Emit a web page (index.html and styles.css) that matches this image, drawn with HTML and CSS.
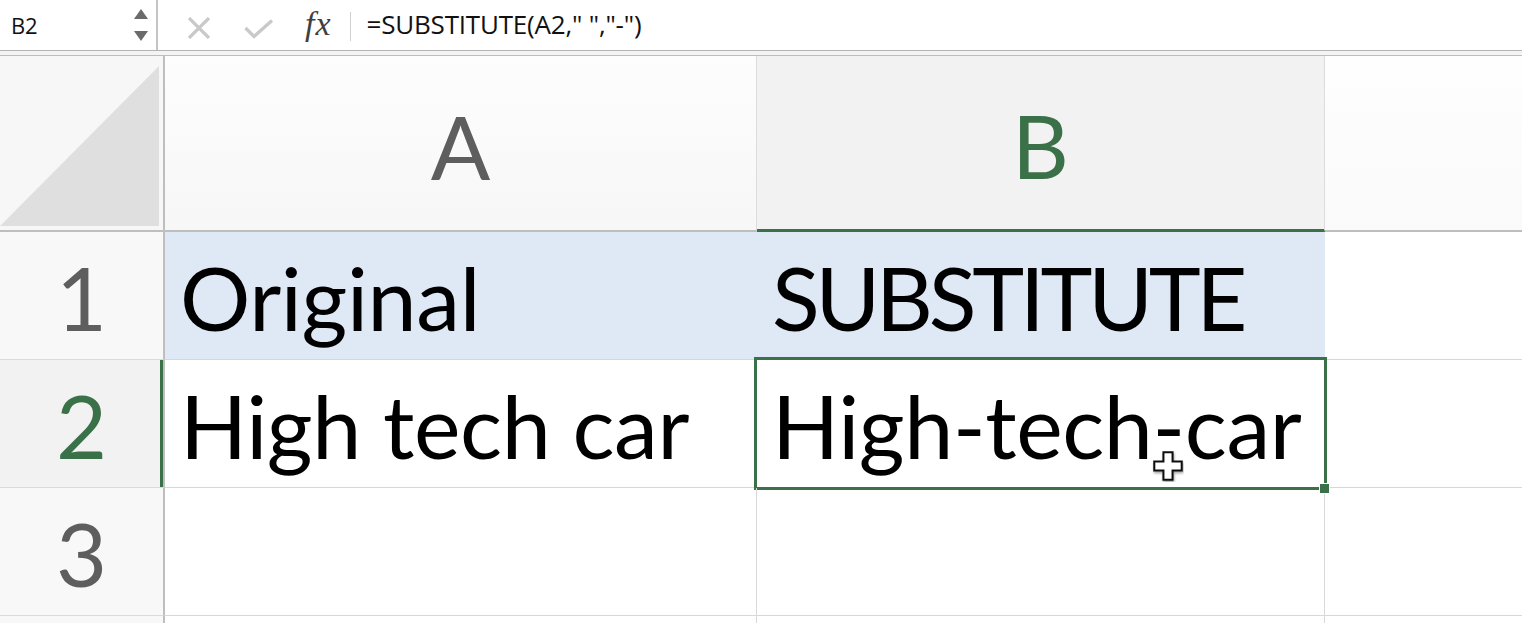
FILE: index.html
```html
<!DOCTYPE html>
<html>
<head>
<meta charset="utf-8">
<link rel="stylesheet" href="styles.css">
</head>
<body>
<div class="toolbar">
  <div class="namebox">
    <span class="name">B2</span>
    <svg class="spin" width="16" height="34" viewBox="0 0 16 34">
      <polygon points="8,0 15,10 1,10" fill="#6b6b6b"/>
      <polygon points="1,22 15,22 8,32" fill="#6b6b6b"/>
    </svg>
  </div>
  <div class="tools">
    <svg class="ico-x" width="24" height="22" viewBox="0 0 24 22">
      <path d="M2 1 L22 21 M22 1 L2 21" stroke="#c9c9c9" stroke-width="3.2" fill="none"/>
    </svg>
    <svg class="ico-ok" width="30" height="20" viewBox="0 0 30 20">
      <path d="M1.5 9 L10 17.5 L28 1.5" stroke="#c9c9c9" stroke-width="3.4" fill="none"/>
    </svg>
    <span class="fx">fx</span>
    <span class="vsep"></span>
  </div>
  <div class="formula">=SUBSTITUTE(A2," ","-")</div>
</div>
<div class="gap"></div>
<div class="sheet">
  <div class="corner"><div class="tri"></div></div>
  <div class="colhead">A</div>
  <div class="colhead sel">B</div>
  <div class="colhead last"></div>

  <div class="rowhead">1</div>
  <div class="cell hl">Original</div>
  <div class="cell hl"><span class="caps">SUBSTITUTE</span></div>
  <div class="cell last"></div>

  <div class="rowhead sel">2</div>
  <div class="cell">High tech car</div>
  <div class="cell active">High-tech-car<span class="handle"></span>
    <svg class="cursor" width="32" height="32" viewBox="0 0 28 28">
      <defs><filter id="sh" x="-30%" y="-30%" width="160%" height="160%"><feDropShadow dx="0.6" dy="1.6" stdDeviation="1" flood-color="#000" flood-opacity="0.35"/></filter></defs>
      <path d="M10 2 H18 V10 H26 V18 H18 V26 H10 V18 H2 V10 H10 Z" fill="#ffffff" stroke="#111" stroke-width="1.8" filter="url(#sh)"/>
    </svg>
  </div>
  <div class="cell last"></div>

  <div class="rowhead">3</div>
  <div class="cell"></div>
  <div class="cell"></div>
  <div class="cell last"></div>

  <div class="rowhead"></div>
  <div class="cell"></div>
  <div class="cell"></div>
  <div class="cell last"></div>
</div>
</body>
</html>
```
FILE: styles.css
```css
html, body {
  margin: 0;
  padding: 0;
  background: #ffffff;
  overflow: hidden;
  width: 1522px;
  height: 623px;
}
body {
  font-family: Lato, "Open Sans", sans-serif;
}
.toolbar {
  height: 50px;
  display: flex;
  align-items: stretch;
  border-bottom: 1px solid #b4b4b4;
  background: #ffffff;
}
.namebox {
  width: 158px;
  border-right: 2px solid #c4c4c4;
  display: flex;
  align-items: center;
  justify-content: space-between;
  box-sizing: border-box;
  padding: 0 7px 0 11px;
}
.name {
  font-size: 22px;
  color: #111;
  font-family: "Open Sans", Lato, sans-serif;
  letter-spacing: -0.3px;
}
.spin { margin-top: 2px; }
.tools {
  display: flex;
  align-items: center;
  padding-left: 29px;
}
.ico-x { margin-top: 5px; }
.ico-ok { margin-left: 33px; margin-top: 8px; }
.fx {
  font-family: "Liberation Serif", "DejaVu Serif", serif;
  font-style: italic;
  font-size: 34px;
  color: #3f3f3f;
  margin-left: 31px;
  margin-top: -2px;
  letter-spacing: 1px;
}
.vsep {
  width: 1px;
  height: 29px;
  background: #d0d0d0;
  margin-left: 18px;
  margin-top: 2px;
}
.formula {
  display: flex;
  align-items: center;
  padding-left: 16px;
  font-family: "Open Sans", Lato, sans-serif;
  font-size: 26px;
  color: #111;
  letter-spacing: -0.2px;
  padding-bottom: 2px;
}
.gap {
  height: 4px;
  background: #f4f4f4;
  border-bottom: 1px solid #bdbdbd;
}
.sheet {
  display: grid;
  grid-template-columns: 165px 592px 568px 1fr;
  grid-template-rows: 176px 128px 128px 128px 128px;
}
.corner {
  background: #f7f7f7;
  border-right: 2px solid #bebebe;
  border-bottom: 2px solid #bebebe;
  box-sizing: border-box;
  padding: 10px 4px 4px 0;
}
.tri {
  width: 100%;
  height: 100%;
  background: #dfdfdf;
  clip-path: polygon(100% 0, 100% 100%, 0 100%);
}
.colhead {
  background: linear-gradient(#fdfdfd, #f7f7f7);
  border-right: 1px solid #dcdcdc;
  border-bottom: 2px solid #bebebe;
  box-sizing: border-box;
  display: flex;
  align-items: center;
  justify-content: center;
  padding-top: 5px;
  font-size: 88px;
  color: #5e5e5e;
}
.colhead.sel {
  background: #f2f2f2;
  color: #3b7148;
  border-bottom: 3px solid #3b7148;
}
.colhead.last { border-right: none; background: linear-gradient(#fefefe, #fafafa); }
.rowhead {
  background: #f8f8f8;
  border-right: 2px solid #bebebe;
  border-bottom: 1px solid #dadada;
  box-sizing: border-box;
  display: flex;
  align-items: center;
  justify-content: center;
  padding-top: 3px;
  font-size: 88px;
  color: #5e5e5e;
}
.rowhead.sel {
  background: #f2f2f2;
  color: #3b7148;
  box-shadow: inset -3px 0 0 #3b7148;
}
.cell {
  border-right: 1px solid #d8d8d8;
  border-bottom: 1px solid #d8d8d8;
  box-sizing: border-box;
  display: flex;
  align-items: center;
  padding: 3px 0 0 15px;
  font-size: 88px;
  color: #000;
  white-space: nowrap;
  position: relative;
  letter-spacing: -0.4px;
}
.caps { letter-spacing: -4.2px; }
.cell.hl { background: #dfe8f5; border-right-color: #dfe8f5; border-bottom-color: #d0d8e4; }
.cell.last { border-right: none; }
.cell.active { padding-left: 15px; }
.cell.active::after {
  content: "";
  position: absolute;
  left: -3px;
  top: -3px;
  right: -3px;
  bottom: -3px;
  border: 3px solid #3b7148;
  pointer-events: none;
}
.handle {
  position: absolute;
  right: -6px;
  bottom: -7px;
  width: 9px;
  height: 9px;
  background: #3b7148;
  border: 1px solid #ffffff;
  z-index: 2;
}
.cursor {
  position: absolute;
  left: 395px;
  top: 90px;
  z-index: 3;
}
```
